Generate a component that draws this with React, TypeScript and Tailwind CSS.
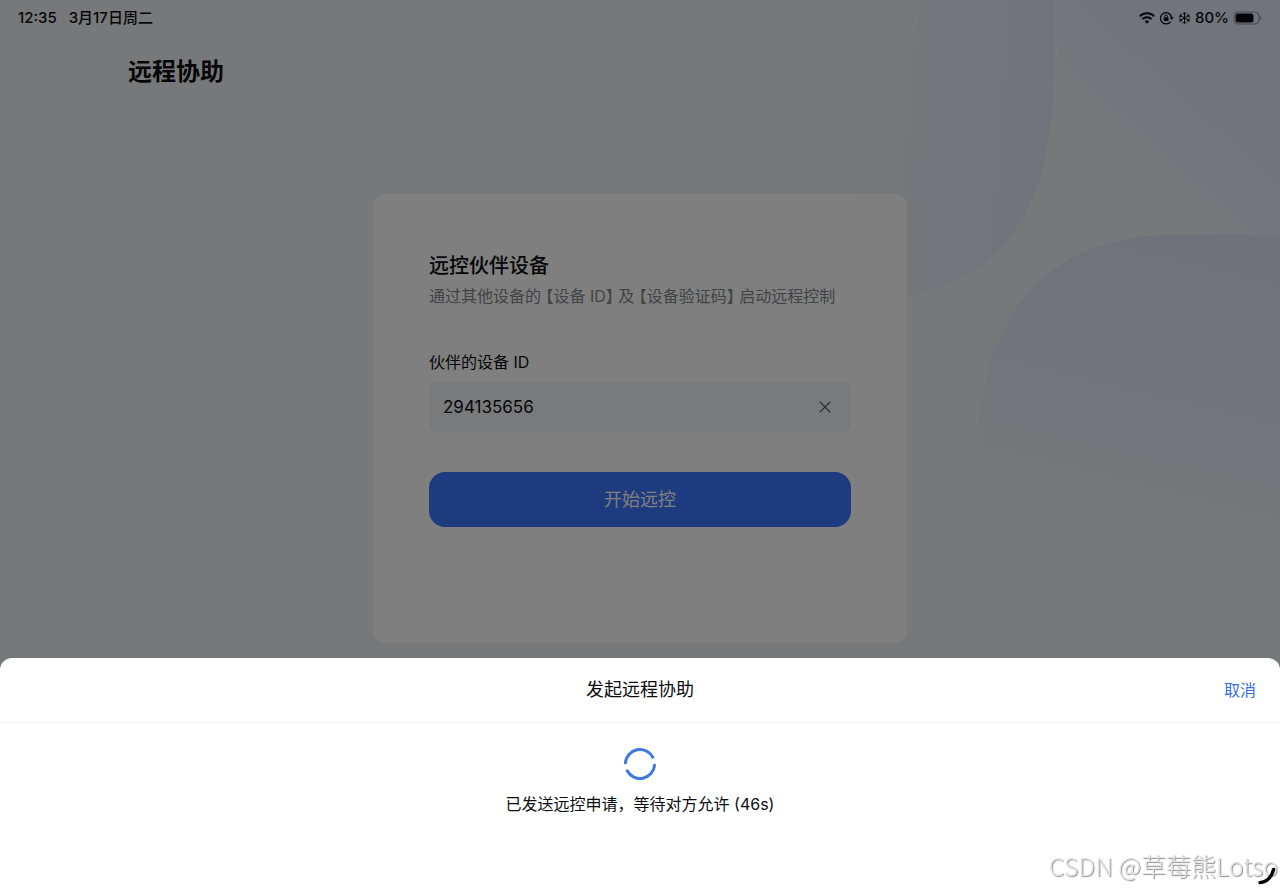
import { useState } from "react";
import { X } from "lucide-react";

function App() {
  const [sheetOpen, setSheetOpen] = useState(true);

  return (
    <div className="relative isolate min-h-screen overflow-hidden bg-[#eff1f4] font-['Inter','Noto_Sans_CJK_SC',sans-serif] text-[#0c0d10]">
      <Backdrop />
      <StatusBar />
      <header className="px-32 pt-4">
        <h1 className="text-2xl leading-10 font-bold">远程协助</h1>
      </header>
      <main className="flex justify-center px-6 pt-[102px] pb-60">
        <PartnerCard onStart={() => setSheetOpen(true)} />
      </main>
      {sheetOpen && <RequestSheet onCancel={() => setSheetOpen(false)} />}
      <Watermark />
    </div>
  );
}

function StatusBar() {
  return (
    <div className="flex h-9 items-center justify-between px-[18px] text-[15px] font-medium">
      <div className="flex gap-3">
        <span>12:35</span>
        <span>3月17日周二</span>
      </div>
      <div className="flex items-center gap-1">
        <WifiIcon />
        <RotationLockIcon />
        <SnowflakeIcon />
        <span>80%</span>
        <BatteryIcon />
      </div>
    </div>
  );
}

function PartnerCard({ onStart }: { onStart: () => void }) {
  const [deviceId, setDeviceId] = useState("294135656");

  const handleSubmit = (event: React.FormEvent<HTMLFormElement>) => {
    event.preventDefault();
    onStart();
  };

  return (
    <section className="w-full max-w-[534px] rounded-xl bg-white px-14 pt-14 pb-[116px]">
      <h2 className="text-xl leading-8 font-medium">远控伙伴设备</h2>
      <p className="text-base leading-7 whitespace-nowrap text-[#85878b] [font-feature-settings:'halt']">
        通过其他设备的 【设备 ID】 及 【设备验证码】 启动远程控制
      </p>
      <form onSubmit={handleSubmit} className="pt-9">
        <label htmlFor="deviceId" className="block text-base leading-8">
          伙伴的设备 ID
        </label>
        <div className="mt-1 flex h-[50px] items-center rounded-lg bg-[#f2f4f7] pr-4 pl-3.5">
          <input
            className="h-7 min-w-0 flex-1 bg-transparent text-[17px] leading-7 outline-none"
            type="text"
            id="deviceId"
            name="deviceId"
            value={deviceId}
            onChange={(e) => setDeviceId(e.target.value)}
          />
          <button type="button" aria-label="清除" onClick={() => setDeviceId("")}>
            <X size={20} strokeWidth={1.4} className="text-[#5c5f66]" />
          </button>
        </div>
        <button
          type="submit"
          className="mt-10 h-[55px] w-full rounded-2xl bg-[#3c76ff] text-lg text-white"
        >
          开始远控
        </button>
      </form>
    </section>
  );
}

function RequestSheet({ onCancel }: { onCancel: () => void }) {
  return (
    <div className="fixed inset-0 flex items-end bg-black/50">
      <div role="dialog" aria-labelledby="sheetTitle" className="w-full rounded-t-xl bg-white pb-[69px]">
        <div className="grid h-[65px] grid-cols-[1fr_auto_1fr] items-center border-b border-[#f2f2f3] px-6">
          <h2 id="sheetTitle" className="col-start-2 text-lg">
            发起远程协助
          </h2>
          <button type="button" onClick={onCancel} className="justify-self-end text-base text-[#3470e0]">
            取消
          </button>
        </div>
        <div className="flex flex-col items-center gap-[7px] pt-6">
          <Spinner />
          <p className="text-base leading-8">已发送远控申请，等待对方允许 (46s)</p>
        </div>
      </div>
    </div>
  );
}

// soft blue shapes behind the page
function Backdrop() {
  return (
    <svg
      className="absolute top-0 right-0 -z-10 h-[660px] w-[460px]"
      viewBox="0 0 460 660"
      aria-hidden="true"
    >
      <defs>
        <linearGradient id="leaf" x1="0" y1="0.4" x2="1" y2="0.5">
          <stop offset="0" stopColor="#eef1f4" />
          <stop offset="0.3" stopColor="#eaeef4" />
          <stop offset="0.6" stopColor="#e6ebf7" />
          <stop offset="1" stopColor="#e2e7f7" />
        </linearGradient>
        <linearGradient id="corner" x1="0.2" y1="0.8" x2="0.8" y2="0.1">
          <stop offset="0.1" stopColor="#eff1f4" />
          <stop offset="0.6" stopColor="#e4e9f8" />
        </linearGradient>
        <linearGradient id="hill" x1="0.6" y1="0" x2="0.4" y2="1">
          <stop offset="0" stopColor="#e0e5f4" />
          <stop offset="0.4" stopColor="#e4e9f6" />
          <stop offset="0.7" stopColor="#eaeef3" />
          <stop offset="1" stopColor="#eff1f4" />
        </linearGradient>
      </defs>
      <path d="M100 0H234V60C234 200 195 275 80 299L10 299C10 180 90 110 100 0Z" fill="url(#leaf)" />
      <path d="M236 0H460V236H320C275 200 236 120 236 0Z" fill="url(#corner)" />
      <path d="M460 235H350C225 235 157 320 157 460V600H460Z" fill="url(#hill)" />
    </svg>
  );
}

function WifiIcon() {
  return (
    <svg width="16" height="12" viewBox="0 0 16 12" fill="none" stroke="currentColor" strokeWidth="1.9">
      <path d="M0.8 4.3a10.2 10.2 0 0 1 14.4 0" />
      <path d="M3.4 7.1a6.5 6.5 0 0 1 9.2 0" />
      <path d="M8 11.8 5.7 9.4a3.3 3.3 0 0 1 4.6 0Z" fill="currentColor" stroke="none" />
    </svg>
  );
}

function RotationLockIcon() {
  return (
    <svg width="15" height="14" viewBox="0 0 15 14" fill="none" stroke="currentColor" strokeWidth="1.3">
      <path d="M11.6 10.6A5.6 5.6 0 1 1 12.6 6.4" />
      <path d="M10.6 6.2h4.2l-2.1 2.7Z" fill="currentColor" stroke="none" />
      <rect x="4.7" y="6.2" width="4.8" height="3.8" rx="0.7" fill="currentColor" stroke="none" />
      <path d="M5.7 6.5V5.3a1.4 1.4 0 0 1 2.8 0v1.2" strokeWidth="1" />
    </svg>
  );
}

function SnowflakeIcon() {
  return (
    <svg
      width="13"
      height="14"
      viewBox="0 0 13 14"
      fill="none"
      stroke="currentColor"
      strokeWidth="1"
      strokeLinecap="round"
    >
      <path d="M6.5 1.5v11M1.7 4.2l9.6 5.6M11.3 4.2 1.7 9.8" />
      <path d="m5 2 1.5 1.5L8 2M5 12l1.5-1.5L8 12" />
      <path d="m1.3 6 2.1-.7-.4-2.1M11.7 6l-2.1-.7.4-2.1M1.3 8l2.1.7-.4 2.1M11.7 8l-2.1.7.4 2.1" />
    </svg>
  );
}

function BatteryIcon() {
  return (
    <svg width="29" height="14" viewBox="1 0 29 14" fill="none">
      <rect x="2" y="1" width="25" height="12" rx="4" stroke="currentColor" strokeOpacity="0.4" />
      <rect x="3.5" y="2.5" width="18" height="9" rx="2.5" fill="currentColor" />
      <path d="M28.2 5v4c1.4-.6 1.4-3.4 0-4Z" fill="currentColor" fillOpacity="0.45" />
    </svg>
  );
}

function Spinner() {
  return (
    <svg
      width="34"
      height="34"
      viewBox="0 0 34 34"
      fill="none"
      stroke="#3f78e0"
      strokeWidth="3"
      strokeLinecap="round"
    >
      <path d="M2.4 15.8A14.6 14.6 0 0 1 29.8 10.2" />
      <path d="M31.6 18.2A14.6 14.6 0 0 1 4.2 23.8" />
    </svg>
  );
}

function Watermark() {
  return (
    <div className="pointer-events-none fixed right-0 bottom-0 px-0.5 pb-1.5 font-['Noto_Sans_CJK_SC',sans-serif] text-[25px] leading-9 font-light text-[#e6e6e6] [text-shadow:1px_1px_1px_#8c8c8c]">
      CSDN @草莓熊Lotso
      <svg
        className="absolute right-1 bottom-1"
        width="18"
        height="18"
        viewBox="0 0 18 18"
        fill="none"
        stroke="#000"
        strokeWidth="3.4"
        strokeLinecap="round"
      >
        <path d="M2 15.6C8.5 15 13.6 10 15.6 2.4" />
      </svg>
    </div>
  );
}

export default App;
